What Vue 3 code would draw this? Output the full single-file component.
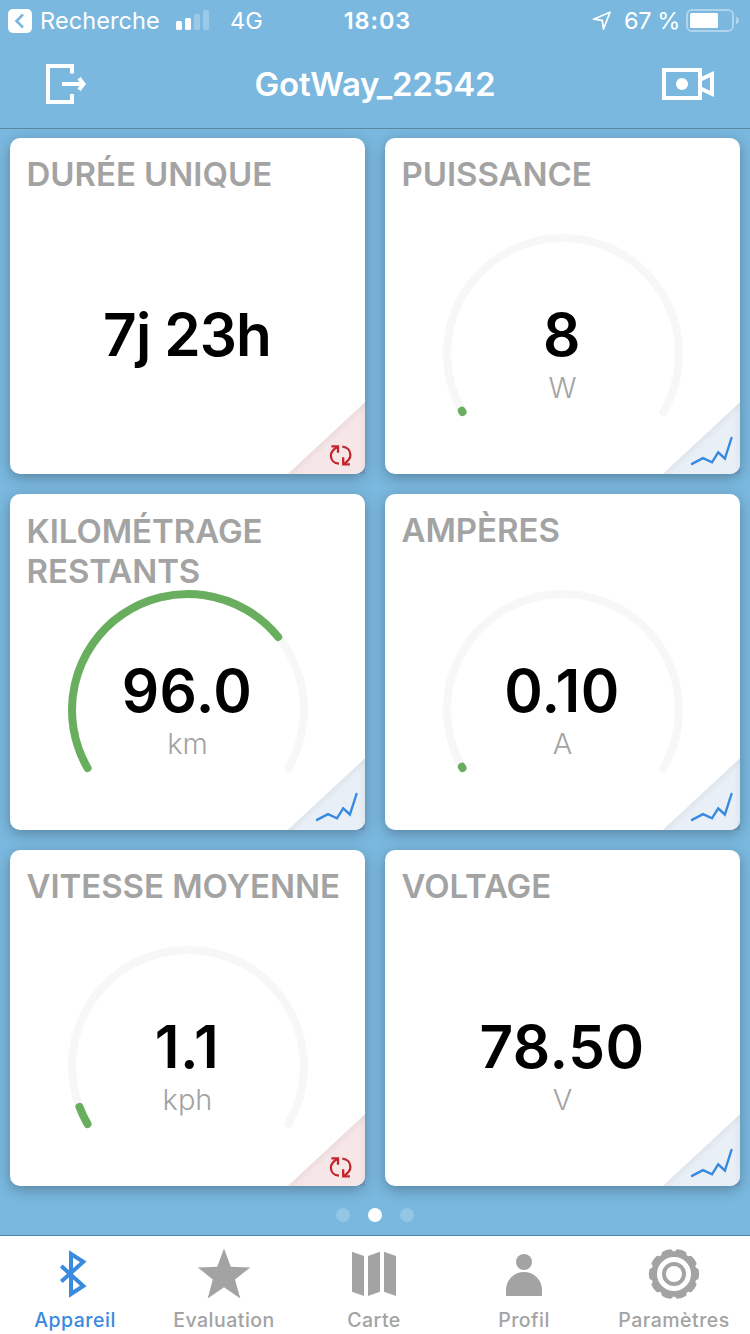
<template>
  <div class="app">
    <header class="top">
      <div class="status">
        <div class="status_left">
          <svg class="back" width="24" height="24" viewBox="0 0 24 24">
            <rect width="24" height="24" rx="5" fill="#fff"/>
            <path d="M15 5.500L8.500 12l6.500 6.500" fill="none" stroke="#7ab8df" stroke-width="2.600"/>
          </svg>
          <span class="back_text">Recherche</span>
          <svg class="signal" width="34" height="20" viewBox="0 0 34 20">
            <rect x="0" y="11" width="6" height="9" rx="1.500" fill="#fff"/>
            <rect x="9" y="8" width="6" height="12" rx="1.500" fill="#fff"/>
            <rect x="18" y="4" width="6" height="16" rx="1.500" fill="#fff" opacity="0.250"/>
            <rect x="27" y="0" width="6" height="20" rx="1.500" fill="#fff" opacity="0.250"/>
          </svg>
          <span class="network">4G</span>
        </div>
        <div class="clock">18:03</div>
        <div class="status_right">
          <svg class="locate" width="20" height="20" viewBox="0 0 20 20">
            <path d="M1.500 8.200L18 1.200L11.500 18L10.300 9.400Z" fill="none" stroke="#fff" stroke-width="1.700" stroke-linejoin="round"/>
          </svg>
          <span class="percent">67 %</span>
          <svg class="battery" width="54" height="24" viewBox="0 0 54 24">
            <rect x="1" y="1" width="46" height="21" rx="5" fill="none" stroke="#fff" stroke-opacity="0.400" stroke-width="2"/>
            <rect x="4" y="4" width="28" height="15" rx="1.500" fill="#fff"/>
            <path d="M50 7.500c4 1.500 4 6.500 0 8z" fill="#fff" opacity="0.400"/>
          </svg>
        </div>
      </div>
      <div class="navbar">
        <svg width="42" height="40" viewBox="0 0 42 40" fill="none" stroke="#fff" stroke-width="4">
          <path d="M26 9.500V2H2v36h24v-8"/>
          <path d="M16 20h22"/>
          <path d="M33 14.300L37.500 20L33 25.700"/>
        </svg>
        <h1>{{ device }}</h1>
        <svg width="52" height="32" viewBox="0 0 52 32" fill="none" stroke="#fff" stroke-width="4">
          <rect x="2" y="2" width="36" height="28"/>
          <path d="M39 11.300L50 6.200v19.600L39 20.700"/>
          <circle cx="20" cy="16" r="6" fill="#fff" stroke="none"/>
        </svg>
      </div>
    </header>

    <main class="cards">
      <section v-for="c in cards" :key="c.name" class="card" :class="c.action">
        <h2 class="name" :class="{long: c.long}">{{ c.name }}</h2>
        <svg v-if="c.level !== undefined" class="gauge" width="240" height="240" viewBox="0 0 240 240">
          <path :d="arc(1)" stroke="#f7f7f7"/>
          <path :d="arc(c.level)" stroke="#69ae5e"/>
        </svg>
        <div class="readout">
          <div class="value" :class="{duration: !c.unit}">{{ c.value }}</div>
          <div class="unit">{{ c.unit }}</div>
        </div>
        <svg class="corner" width="78" height="72" viewBox="0 0 78 72">
          <path class="fold" d="M0.500 72L78 0V72Z"/>
          <path class="fold_shade" d="M-8 80L86 -7.300"/>
          <path class="fold_shade" d="M79 -5V77"/>
          <g v-if="c.action === 'reset'" fill="none" stroke="#c4242b" stroke-width="2.300">
            <path d="M52 61.700C47.200 61.300 43.900 58 43.900 53.700C43.900 50.300 45.900 47.500 50.700 44.800"/>
            <path d="M44.400 44.300h6.600v6.500"/>
            <path d="M55.400 44.700C60.200 45.100 63.400 48.500 63.400 53C63.400 56.500 61.300 59.200 56.700 61.900"/>
            <path d="M62.900 62.300h-6.700v-7"/>
          </g>
          <path v-else d="M30 61.900L41 56.200L50 60.300L56.200 50.300L62.900 56.500L69.500 36" fill="none" stroke="#378ae0" stroke-width="2.400" stroke-linecap="round"/>
        </svg>
      </section>
    </main>

    <div class="pager">
      <i v-for="n in 3" :key="n" :class="{on: n === 2}"></i>
    </div>

    <nav class="tabs">
      <div class="tab active">
        <svg width="52" height="52" viewBox="0 0 52 52">
          <path d="M12.300 18L34.300 38L22 46V6L34.300 13.800L12.300 33.600" fill="none" stroke="currentColor" stroke-width="4"/>
        </svg>
        <span>Appareil</span>
      </div>
      <div class="tab">
        <svg width="52" height="52" viewBox="0 0 52 52">
          <path d="M26 0.500L32.800 18.700L52.300 19.400L37 31.400L42.300 50.400L26 39.300L9.700 50.400L14.800 31.400L-0.300 19.400L19.200 18.700Z" fill="currentColor"/>
        </svg>
        <span>Evaluation</span>
      </div>
      <div class="tab">
        <svg width="52" height="52" viewBox="0 0 52 52">
          <path d="M4 3.700L16 8V48L4 43.700ZM20 8L32 3.700V43.700L20 48ZM36 3.700L48 8V48L36 43.700Z" fill="currentColor"/>
        </svg>
        <span>Carte</span>
      </div>
      <div class="tab">
        <svg width="52" height="52" viewBox="0 0 52 52">
          <circle cx="26" cy="14" r="8" fill="currentColor"/>
          <path d="M8 48V42a18 18 0 0 1 36 0V48Z" fill="currentColor"/>
        </svg>
        <span>Profil</span>
      </div>
      <div class="tab">
        <svg width="52" height="52" viewBox="0 0 52 52">
          <path :d="gear" fill="currentColor"/>
          <circle cx="26" cy="26" r="14.500" fill="none" stroke="#fff" stroke-width="5"/>
          <circle cx="26" cy="26" r="8" fill="#fff"/>
        </svg>
        <span>Paramètres</span>
      </div>
    </nav>
  </div>
</template>

<script setup>
    import {ref} from "vue";

    const device=ref("GotWay_22542")
    const cards=ref([
      {name:"DURÉE UNIQUE",value:"7j 23h",unit:"",action:"reset"},
      {name:"PUISSANCE",value:"8",unit:"W",level:0.003,action:"chart"},
      {name:"KILOMÉTRAGE RESTANTS",value:"96.0",unit:"km",level:0.7125,action:"chart",long:true},
      {name:"AMPÈRES",value:"0.10",unit:"A",level:0.003,action:"chart"},
      {name:"VITESSE MOYENNE",value:"1.1",unit:"kph",level:0.039,action:"reset"},
      {name:"VOLTAGE",value:"78.50",unit:"V",action:"chart"},
    ])

    // the dial covers 240 degrees, starting bottom left
    function arc(level) {
      const sweep=240*level;
      const point=(deg)=>{
        const a=deg*Math.PI/180;
        return (120+116*Math.cos(a)).toFixed(2)+" "+(120+116*Math.sin(a)).toFixed(2);
      }
      return `M${point(150)}A116 116 0 ${sweep>180?1:0} 1 ${point(150+sweep)}`;
    }

    // gear outline: [offset in steps, radius] for every corner of one tooth
    const teeth=10;
    const step=360/teeth;
    const corners=[[-0.42,22.8],[-0.36,24.3],[-0.28,25],[0,25.2],[0.28,25],[0.36,24.3],[0.42,22.8]];
    let gear="";
    for (let i=0;i<teeth;i++){
      for (const [k,r] of corners){
        const a=(i+k)*step*Math.PI/180;
        gear+=(gear?"L":"M")+(26+r*Math.cos(a)).toFixed(2)+" "+(26+r*Math.sin(a)).toFixed(2);
      }
    }
    gear+="Z";
</script>

<style>
    body{
        margin: 0;
        background-color: #7ab8df;
    }
</style>

<style scoped>
    .app{
        width: 750px;
        height: 1334px;
        display: flex;
        flex-direction: column;
        overflow: hidden;
        background-color: #7ab8df;
        font-family: Inter,"Liberation Sans",sans-serif;
    }
    svg{
        display: block;
        overflow: visible;
        flex: none;
    }
    .top{
        height: 128px;
        border-bottom: 1px solid #5986a3;
        color: white;
    }
    .status{
        height: 40px;
        display: grid;
        grid-template-columns: 1fr auto 1fr;
        font-size: 23.5px;
        line-height: 42px;
        white-space: nowrap;
    }
    .status_left,.status_right{
        display: flex;
        align-items: flex-start;
    }
    .status_left{
        padding-left: 8px;
    }
    .back{
        margin-top: 9px;
    }
    .back_text{
        width: 120px;
        margin-left: 8px;
        letter-spacing: 0.1px;
    }
    .signal{
        margin-top: 10px;
        margin-left: 16px;
    }
    .network{
        margin-left: 20px;
    }
    .clock{
        padding-left: 5px;
        font-weight: 600;
        letter-spacing: 0.9px;
    }
    .status_right{
        justify-content: flex-end;
        padding-right: 10px;
    }
    .locate{
        margin-top: 11px;
    }
    .percent{
        margin-left: 12px;
        letter-spacing: -0.4px;
    }
    .battery{
        margin-top: 9px;
        margin-left: 6px;
    }
    .navbar{
        height: 88px;
        display: flex;
        align-items: center;
        justify-content: space-between;
        box-sizing: border-box;
        padding: 0 36px 0 46px;
    }
    .navbar h1{
        margin: 0;
        font-size: 33px;
        line-height: 40px;
        font-weight: 600;
        letter-spacing: -0.2px;
    }
    .cards{
        position: relative;
        z-index: 0;
        padding: 9px 10px 0;
        display: grid;
        grid-template-columns: 355px 355px;
        grid-auto-rows: 336px;
        gap: 20px;
    }
    .card{
        position: relative;
        display: grid;
        grid-template: 336px / 355px;
        border-radius: 10px;
        background-color: white;
        box-shadow: 0 4px 14px 0 rgba(0,0,0,0.28);
    }
    /* square shadow tip peeking out behind the rounded corner */
    .card::after{
        content: "";
        position: absolute;
        z-index: -1;
        right: 0;
        bottom: 0;
        width: 10px;
        height: 10px;
        background-color: rgba(110,110,150,0.25);
    }
    .card > *{
        grid-area: 1 / 1;
    }
    .name{
        margin: 16px 0 0 16.5px;
        font-size: 33px;
        line-height: 40px;
        font-weight: 600;
        letter-spacing: -0.05px;
        color: #a3a3a3;
    }
    .name.long{
        margin-top: 17px;
        margin-right: 60px;
    }
    .gauge{
        margin-top: 96px;
        justify-self: center;
        fill: none;
        stroke-width: 8px;
        stroke-linecap: round;
    }
    .readout{
        padding-top: 162px;
        text-align: center;
    }
    .value{
        font-size: 58.5px;
        line-height: 70px;
        font-weight: 600;
        letter-spacing: 0.5px;
        margin-right: 1px;
        color: black;
    }
    .value.duration{
        letter-spacing: -0.9px;
    }
    .unit{
        font-size: 29px;
        line-height: 36px;
        font-weight: 300;
        color: #a3a3a3;
    }
    .corner{
        place-self: end;
        clip-path: path("M0.5 72L78 0V62A10 10 0 0 1 68 72Z");
    }
    .fold_shade{
        fill: none;
        stroke: black;
        stroke-opacity: 0.035;
        stroke-width: 8px;
        filter: blur(2px);
    }
    .reset .fold{
        fill: #f6e6e8;
    }
    .chart .fold{
        fill: #e8eff6;
    }
    .pager{
        display: flex;
        justify-content: center;
        gap: 18px;
        padding-top: 22px;
        height: 27px;
    }
    .pager i{
        width: 14px;
        height: 14px;
        border-radius: 50%;
        background-color: rgba(255,255,255,0.2);
    }
    .pager i.on{
        background-color: white;
    }
    .tabs{
        height: 98px;
        border-top: 1px solid #4a86ad;
        padding-left: 1px;
        display: grid;
        grid-template-columns: 148px repeat(4,150px);
        background-color: white;
    }
    .tab{
        display: flex;
        flex-direction: column;
        align-items: center;
        padding-top: 12px;
        color: #a3a3a3;
    }
    .tab.active{
        color: #3a8ae0;
    }
    .tab span{
        margin-top: 8px;
        font-size: 19.5px;
        line-height: 24px;
        font-weight: 500;
        letter-spacing: 0.5px;
    }
</style>
